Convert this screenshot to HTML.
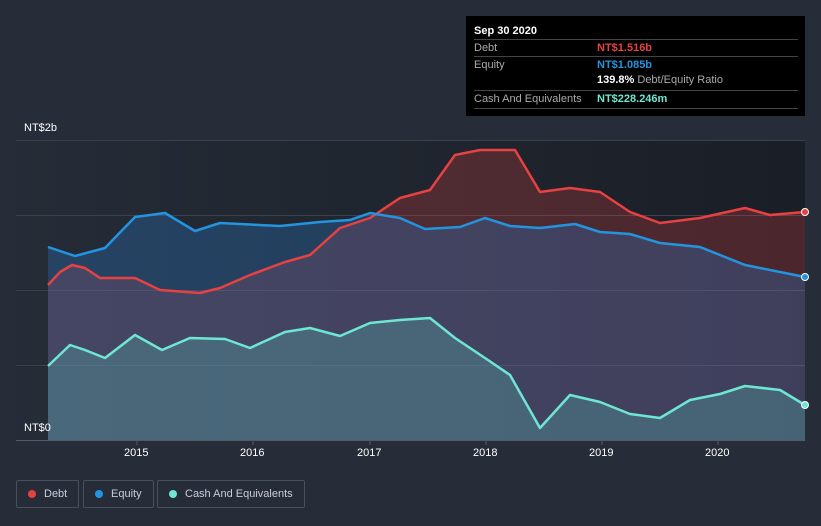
<!DOCTYPE html><html><head><style>
body{margin:0;width:821px;height:526px;background:#262c38;font-family:"Liberation Sans",sans-serif;overflow:hidden;position:relative}
.tt{position:absolute;left:466px;top:16px;width:339px;height:100px;background:#000;color:#fff;font-size:11px}
.tt .h{position:absolute;left:8px;top:9px;font-weight:bold;font-size:11px}
.row{position:absolute;left:8px;width:324px;border-top:1px solid #444;height:17px;line-height:17px}
.row .l{position:absolute;left:0;color:#aaa}.row .v{position:absolute;left:123px;font-weight:bold}
.lg{position:absolute;top:480px;height:26px;border:1px solid #4a505a;border-radius:2px;color:#ccd;font-size:11px;line-height:26px}
.lg i{position:absolute;left:11px;top:9px;width:8px;height:8px;border-radius:50%}
.lg span{position:absolute;left:27px}
.ax{position:absolute;color:#fff;font-size:11px}
</style></head><body>
<svg width="821" height="526" style="position:absolute;left:0;top:0">
<defs><linearGradient id="bg" x1="0" x2="1"><stop offset="0" stop-color="#252c37"/><stop offset="1" stop-color="#1a1e26"/></linearGradient></defs>
<rect x="16" y="140" width="789" height="300" fill="url(#bg)"/>
<g stroke="#3c424d" stroke-width="1"><line x1="16" y1="140.5" x2="805" y2="140.5"/><line x1="16" y1="215.5" x2="805" y2="215.5"/><line x1="16" y1="290.5" x2="805" y2="290.5"/><line x1="16" y1="365.5" x2="805" y2="365.5"/></g>
<path d="M48,285 L60,272 72,265 85,268 100,278 135,278 160,290 200,293 220,288 250,275 285,262 310,255 340,228 370,218 400,198 430,190 455,155 480,150 515,150 540,192 570,188 600,192 630,212 660,223 700,218 745,208 770,215 805,212 L805,440 48,440Z" fill="#e04040" fill-opacity="0.25"/>
<path d="M48,247 L75,256 105,248 135,217 165,213 195,231 220,223 280,226 320,222 350,220 370,213 400,218 425,229 460,227 485,218 510,226 540,228 575,224 600,232 630,234 660,243 700,247 745,265 805,277 L805,440 48,440Z" fill="#2a6fb8" fill-opacity="0.35"/>
<path d="M48,366 L70,345 85,350 105,358 135,335 162,350 190,338 225,339 250,348 285,332 310,328 340,336 370,323 400,320 430,318 455,338 485,358 510,375 540,428 570,395 600,402 630,414 660,418 690,400 720,394 745,386 780,390 805,405 L805,440 48,440Z" fill="#5ad0c0" fill-opacity="0.25"/>
<g fill="none" stroke-width="2.5" stroke-linejoin="round">
<path d="M48,285 L60,272 72,265 85,268 100,278 135,278 160,290 200,293 220,288 250,275 285,262 310,255 340,228 370,218 400,198 430,190 455,155 480,150 515,150 540,192 570,188 600,192 630,212 660,223 700,218 745,208 770,215 805,212" stroke="#e84142"/>
<path d="M48,247 L75,256 105,248 135,217 165,213 195,231 220,223 280,226 320,222 350,220 370,213 400,218 425,229 460,227 485,218 510,226 540,228 575,224 600,232 630,234 660,243 700,247 745,265 805,277" stroke="#2394df"/>
<path d="M48,366 L70,345 85,350 105,358 135,335 162,350 190,338 225,339 250,348 285,332 310,328 340,336 370,323 400,320 430,318 455,338 485,358 510,375 540,428 570,395 600,402 630,414 660,418 690,400 720,394 745,386 780,390 805,405" stroke="#6ee6d2"/>
</g>
<circle cx="805" cy="212" r="3.5" fill="#e84142" stroke="#fff"/>
<circle cx="805" cy="277" r="3.5" fill="#2394df" stroke="#fff"/>
<circle cx="805" cy="405" r="3.5" fill="#6ee6d2" stroke="#fff"/>
<line x1="16" y1="440.5" x2="805" y2="440.5" stroke="#555b66"/>
<g stroke="#555b66"><line x1="137" y1="440" x2="137" y2="445"/><line x1="253" y1="440" x2="253" y2="445"/><line x1="370" y1="440" x2="370" y2="445"/><line x1="486" y1="440" x2="486" y2="445"/><line x1="602" y1="440" x2="602" y2="445"/><line x1="718" y1="440" x2="718" y2="445"/></g>
</svg>
<div class="ax" style="left:24px;top:122px">NT$2b</div>
<div class="ax" style="left:24px;top:422px">NT$0</div>
<div class="ax" style="left:124px;top:447px">2015</div>
<div class="ax" style="left:240px;top:447px">2016</div>
<div class="ax" style="left:357px;top:447px">2017</div>
<div class="ax" style="left:473px;top:447px">2018</div>
<div class="ax" style="left:589px;top:447px">2019</div>
<div class="ax" style="left:705px;top:447px">2020</div>
<div class="tt"><div class="h">Sep 30 2020</div>
<div class="row" style="top:23px"><span class="l">Debt</span><span class="v" style="color:#e84142">NT$1.516b</span></div>
<div class="row" style="top:40px"><span class="l">Equity</span><span class="v" style="color:#2394df">NT$1.085b</span></div>
<div style="position:absolute;left:131px;top:58px"><b>139.8%</b> <span style="color:#aaa">Debt/Equity Ratio</span></div>
<div class="row" style="top:74px;border-bottom:1px solid #444"><span class="l">Cash And Equivalents</span><span class="v" style="color:#6ee6d2">NT$228.246m</span></div>
</div>
<div class="lg" style="left:16px;width:61px"><i style="background:#e84142"></i><span>Debt</span></div>
<div class="lg" style="left:83px;width:69px"><i style="background:#2394df"></i><span>Equity</span></div>
<div class="lg" style="left:157px;width:146px"><i style="background:#6ee6d2"></i><span>Cash And Equivalents</span></div>
</body></html>
